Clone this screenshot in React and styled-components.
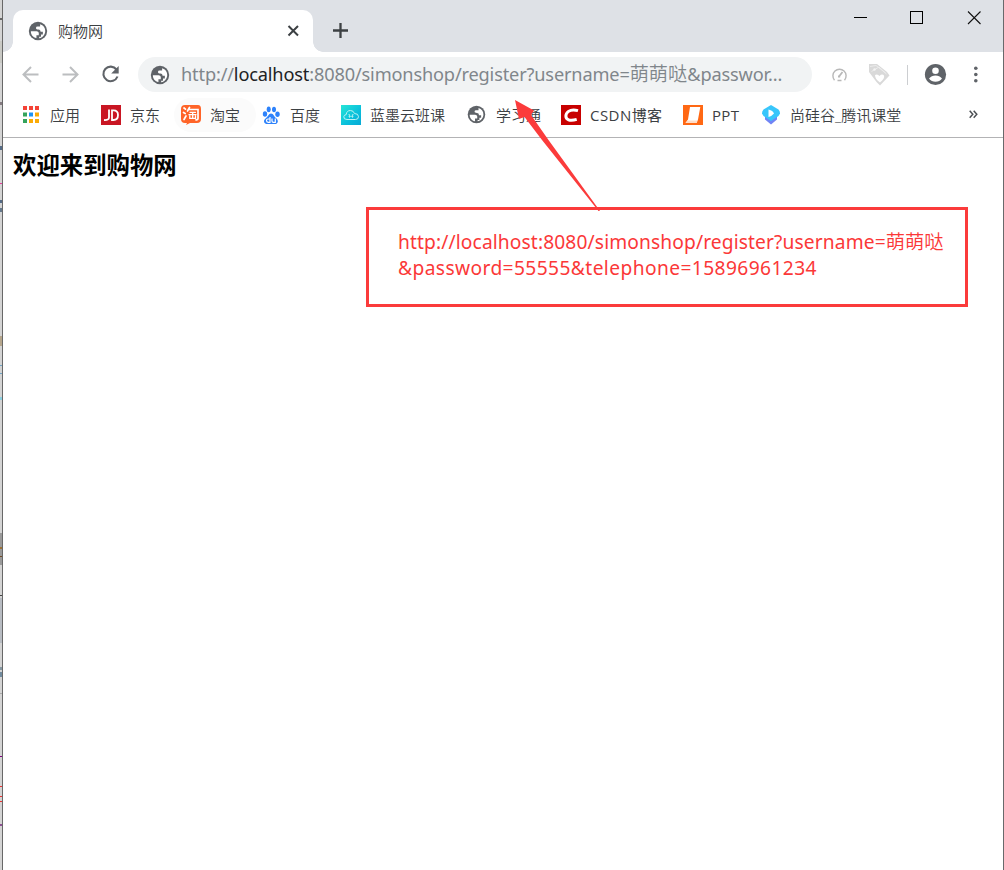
import React from "react";
import styled, { createGlobalStyle } from "styled-components";

const UI = '"Noto Sans", "Noto Sans CJK SC", sans-serif';
const CJK = '"Open Sans", "Noto Sans CJK SC", sans-serif';

const Global = createGlobalStyle`
  html, body { margin: 0; padding: 0; background: #fff; overflow: hidden; }
  * { box-sizing: border-box; }
  svg { display: block; flex: none; }
`;

const Desktop = styled.div`
  position: relative;
  display: flex;
  width: 1004px;
  height: 870px;
  overflow: hidden;
`;

const Behind = styled.svg`
  width: 2px;
  height: 870px;
`;

const Window = styled.div`
  flex: 1;
  display: flex;
  flex-direction: column;
  border-left: 1px solid #686868;
  border-right: 1px solid #68696b;
  background: #fff;
`;

const TabStrip = styled.header`
  display: flex;
  align-items: flex-start;
  height: 52px;
  padding-left: 10px;
  background: #dee1e6;
`;

const Tab = styled.div`
  position: relative;
  display: flex;
  align-items: center;
  width: 300px;
  height: 42px;
  margin-top: 10px;
  padding: 0 13px 0 14px;
  border-radius: 10px 10px 0 0;
  background: #fff;

  &::before, &::after {
    content: "";
    position: absolute;
    bottom: 0;
    width: 10px;
    height: 10px;
  }
  &::before {
    left: -10px;
    background: radial-gradient(circle at 0 0, transparent 9.5px, #fff 10px);
  }
  &::after {
    right: -10px;
    background: radial-gradient(circle at 100% 0, transparent 9.5px, #fff 10px);
  }
`;

const TabTitle = styled.span`
  flex: 1;
  margin: 0 0 1px 9px;
  font: 15px/20px ${CJK};
  font-weight: 350;
  color: #3c4043;
`;

const NewTab = styled.div`
  margin: 23px 0 0 20px;
`;

const Controls = styled.div`
  display: flex;
  gap: 43px;
  margin: 11px 22px 0 auto;
`;

const Toolbar = styled.div`
  display: flex;
  align-items: center;
  height: 45px;
  padding-left: 17px;
`;

const NavButtons = styled.div`
  display: flex;
  gap: 20px;
  width: 118px;
`;

const Omnibox = styled.div`
  display: flex;
  align-items: center;
  width: 674px;
  height: 35px;
  padding-left: 11px;
  border-radius: 18px;
  background: #f1f3f4;
`;

const Url = styled.div`
  margin: 0 0 1px 10px;
  white-space: pre;
  font: 18.2px/26px ${UI};
  letter-spacing: ${(p) => p.$track}px;
  color: #80868b;
`;

const Host = styled.span`
  color: #202124;
`;

const Han = styled.span`
  font-family: "Noto Sans CJK SC", sans-serif;
  font-size: ${(p) => p.$size}px;
  font-weight: 350;
  letter-spacing: 0;
  line-height: 1;
`;

const Actions = styled.div`
  display: flex;
  align-items: center;
  margin-left: 17px;
`;

const TagIcon = styled.svg`
  margin-left: 19px;
`;

const MenuDots = styled.svg`
  margin-left: 26px;
`;

const Divider = styled.div`
  width: 1px;
  height: 20px;
  margin: 0 16px 0 17px;
  background: #ccced1;
`;

const BookmarkBar = styled.nav`
  display: flex;
  align-items: center;
  height: 41px;
  padding: 0 0 5px 11px;
  border-bottom: 1px solid #b3b3b5;
`;

const Bookmark = styled.div`
  display: flex;
  align-items: center;
  gap: 9px;
  height: 34px;
  margin-right: -2px;
  padding: 0 15px 0 7px;
  border-radius: 17px;
  background: ${(p) => (p.$hover ? "#fbfbfb" : "none")};
`;

const Label = styled.span`
  width: ${(p) => p.$w + 1}px;
  white-space: nowrap;
  font: 15px/20px ${CJK};
  font-weight: ${(p) => p.$weight || 350};
  letter-spacing: ${(p) => p.$track || 0}px;
  color: #3c4043;
`;

const More = styled.svg`
  margin-left: 53px;
`;

const Page = styled.main`
  flex: 1;
  padding: 10px 0 0 10px;
`;

const Heading = styled.h1`
  margin: 0;
  font: bold 23.4px/32px "Noto Sans CJK SC", sans-serif;
  color: #000;
`;

const Callout = styled.div`
  position: absolute;
  left: 366px;
  top: 207px;
  width: 602px;
  height: 100px;
  padding: 19px 0 0 29px;
  border: 3px solid #fb3b3b;
  white-space: pre;
  font: 19.2px/26px ${UI};
  color: #fb3838;
`;

const CalloutLine = styled.div`
  height: 26px;
  letter-spacing: ${(p) => p.$track}px;
`;

const Arrow = styled.svg`
  position: absolute;
  left: 500px;
  top: 90px;
`;

const Globe = ({ size = 22 }) => (
  <svg width={size} height={size} viewBox="0 0 24 24">
    <circle cx="12" cy="12" r="10" fill="#5f6368" />
    <path d="M4.200 12.300H9.300C12.800 12.300 13.200 13.600 12.800 16.600H10.300V19.700C6.500 19 4.200 16 4.200 12.300Z" fill="#fff" />
    <path d="M14.300 4.500C18 5.500 19.900 8.500 19.900 12C19.900 16 17 19.400 13.300 19.800V18.300H15.300V15.800H17.300V12.800H14.800C14.600 11.300 14.300 10.600 12.500 10.400C11 10.300 9.800 9.900 9.800 8.700Q9.800 7.200 11.500 7.200H14.300Z" fill="#fff" />
  </svg>
);

const Back = ({ flip }) => (
  <svg width="20" height="20" viewBox="0 0 20 20" fill="none" stroke="#bcbec0" strokeWidth="2">
    <path d={flip ? "M2.500 9.500H17M10 2L17.500 9.500L10 17" : "M18.500 9.500H4M11 2L3.500 9.500L11 17"} />
  </svg>
);

const APP_COLORS = ["#f44336", "#f44336", "#f44336", "#34a35c", "#1e94f4", "#fbab06", "#34a35c", "#fbab06", "#fbab06"];

const AppsIcon = () => (
  <svg width="20" height="20">
    {APP_COLORS.map((c, i) => (
      <rect key={i} x={2 + (i % 3) * 6} y={1 + Math.floor(i / 3) * 6.500} width="4" height="4" fill={c} />
    ))}
  </svg>
);

const JdIcon = () => (
  <svg width="20" height="20">
    <rect width="20" height="20" fill="#c91623" />
    <g fill="none" stroke="#fff" strokeWidth="1.800">
      <path d="M8 4.500V12.500Q8 15.300 3 15" />
      <path d="M11 5.400H12.500Q17 5.400 17 10Q17 15 12.500 15H11Z" />
    </g>
  </svg>
);

const TaobaoIcon = () => (
  <svg width="20" height="20">
    <path d="M4 0H17Q20 0 20 4V14Q20 18 16 18H9L5 20L6 18H4Q0 18 0 14V4Q0 0 4 0Z" fill="#ff6428" />
    <g fill="none" stroke="#fff" strokeWidth="1.700" strokeLinecap="round">
      <path d="M3 3L4.500 4.200M2.500 7.500L4.200 8.500M3 14.500L5 11" />
      <path d="M8.500 2.500L6.500 6M7.500 4.500H17V13.500Q17 15 15 14.800" />
      <path d="M9 7.300H14.500M8 9.700H15M11.700 7.300V13.200M8.800 11V13.400H14.500V11" strokeWidth="1.300" />
    </g>
  </svg>
);

const BaiduIcon = () => (
  <svg width="20" height="20">
    <g fill="#2d82fb">
      <ellipse cx="4" cy="9" rx="2.200" ry="2.800" />
      <ellipse cx="7.700" cy="4.300" rx="2" ry="2.900" />
      <ellipse cx="13" cy="4.500" rx="2" ry="2.800" />
      <ellipse cx="16.500" cy="9.300" rx="2.200" ry="2.700" />
      <path d="M10 8.500C12.500 8.500 13 11.500 15 13C18.500 16 16.500 19.500 13.500 19H7C3.500 19.500 1.500 16 4.500 13.500C7 12 7.500 8.500 10 8.500Z" />
    </g>
    <g fill="none" stroke="#fff" strokeWidth="1.200">
      <path d="M9 12V17.300H7.200Q5.500 17.300 5.500 15.600T7.200 14H9M11 13.500V16Q11 17.300 12.400 17.300H14.300V13.500" />
    </g>
  </svg>
);

const CloudIcon = () => (
  <svg width="20" height="20">
    <defs>
      <linearGradient id="mo" x2="1" y2="1">
        <stop stopColor="#27e5d6" />
        <stop offset=".6" stopColor="#09bfdc" />
        <stop offset="1" stopColor="#08a9d5" />
      </linearGradient>
    </defs>
    <rect width="20" height="20" fill="url(#mo)" />
    <g fill="none" stroke="#b9f3f4" strokeWidth="1">
      <path d="M6 14.500Q2.500 14.500 2.800 11.700Q3 9.800 5.200 9.600Q5.600 5.500 9.500 5.500Q12.500 5.500 13.500 8.500Q17.500 8.500 17.500 11.700Q17.400 14.500 14.500 14.500Z" />
      <path d="M7.500 9.500H8.500V12.800M12.500 9.500H11.500V12.800M7.500 11.300H12.500" strokeWidth=".8" />
    </g>
  </svg>
);

const CsdnIcon = () => (
  <svg width="20" height="20">
    <rect width="20" height="20" fill="#c80000" />
    <path d="M17 5.600C13 4.500 10 4.600 7.500 6.400C4 9 4 13.500 7.500 14.800C9.500 15.500 12.500 15.300 15.700 14.400" fill="none" stroke="#fff" strokeWidth="3" />
  </svg>
);

const PptIcon = () => (
  <svg width="20" height="20">
    <rect width="20" height="20" fill="#ff6814" />
    <path d="M7 2H17.300L15 14.500L13.500 18H2.500L5 14.500Z" fill="#fff" />
    <path d="M2.500 18L4.500 15.500H14.700L13.500 18Z" fill="#ffdcc6" />
  </svg>
);

const SchoolIcon = () => (
  <svg width="20" height="20">
    <path d="M4 11H16V14.500L10 19.500L4 14.500Z" fill="#7184f5" />
    <path d="M10 0L17.500 4.500Q19 6 19 8.500L17.500 11L10 16L2.500 11L1 8.500Q1 6 2.500 4.500Z" fill="#38c6fb" />
    <path d="M7.500 4.500Q12 5.500 13 8.500Q11 11 7.500 12Z" fill="#fff" />
  </svg>
);

const BOOKMARKS = [
  { label: "应用", w: 30, Icon: AppsIcon },
  { label: "京东", w: 30, Icon: JdIcon },
  { label: "淘宝", w: 30, Icon: TaobaoIcon, hover: true },
  { label: "百度", w: 30, Icon: BaiduIcon },
  { label: "蓝墨云班课", w: 75, Icon: CloudIcon },
  { label: "学习通", w: 44, Icon: () => <Globe size={21} /> },
  { label: "CSDN博客", w: 72, Icon: CsdnIcon, weight: 400, track: 0.45 },
  { label: "PPT", w: 28, Icon: PptIcon, weight: 400, track: 0.3 },
  { label: "尚硅谷_腾讯课堂", w: 112, Icon: SchoolIcon },
];

const MARKS = [
  [18, "#666", 2], [41, "#c9c9c4", 22], [102, "#847a80", 3], [146, "#556b86", 4],
  [183, "#e83b99", 1], [200, "#556b86", 3], [208, "#65798c", 4], [336, "#b5a68c", 10],
  [365, "#70a5c4", 1], [373, "#70a5c4", 1], [397, "#8ccfe0", 3],
  [533, "#9a9a9a", 32], [547, "#9c7134", 2], [556, "#714a25", 1], [595, "#444", 1],
  [598, "#b8bcc2", 45], [667, "#8798a2", 3], [672, "#718b9e", 5], [693, "#aaa", 1],
  [756, "#800080", 1], [786, "#e33", 1], [796, "#e33", 1], [801, "#e33", 1], [824, "#8c4f92", 2],
];

export default function App() {
  return (
    <Desktop>
      <Global />
      <Behind>
        <rect width="2" height="870" fill="#d4d4d4" />
        {MARKS.map(([y, c, h]) => (
          <rect key={y} y={y} width="2" height={h} fill={c} />
        ))}
      </Behind>
      <Window>
        <TabStrip>
          <Tab>
            <Globe />
            <TabTitle>购物网</TabTitle>
            <svg width="13" height="13" stroke="#3c4043" strokeWidth="2">
              <path d="M1.500 1L11 10.500M11 1L1.500 10.500" />
            </svg>
          </Tab>
          <NewTab>
            <svg width="15" height="15" stroke="#3c4043" strokeWidth="2.300">
              <path d="M7.500 0V15M0 7.500H15" />
            </svg>
          </NewTab>
          <Controls>
            <svg width="13" height="13"><rect y="6" width="13" height="1" fill="#000" /></svg>
            <svg width="13" height="13"><rect x=".5" y=".5" width="12" height="12" fill="none" stroke="#000" /></svg>
            <svg width="15" height="14" stroke="#111" strokeWidth="1.100"><path d="M2 .5L14.500 13M14.500 .5L2 13" /></svg>
          </Controls>
        </TabStrip>
        <Toolbar>
          <NavButtons>
            <Back />
            <Back flip />
            <svg width="20" height="20" viewBox="0 0 20 20">
              <path d="M16.500 4.500A7.300 7.300 0 1 0 17.500 11.500" fill="none" stroke="#5f6368" strokeWidth="2.100" />
              <path d="M18.700 1V8.500H11.200Z" fill="#5f6368" />
            </svg>
          </NavButtons>
          <Omnibox>
            <Globe size={22} />
            <Url $track={-0.16}>
              http://<Host>localhost</Host>:8080/simonshop/register?username=<Han $size={19.2}>萌萌哒</Han>&amp;passwor...
            </Url>
          </Omnibox>
          <Actions>
            <svg width="20" height="20" viewBox="0 0 20 20" fill="none" stroke="#b8b8b8" strokeWidth="1.400">
              <path d="M5.500 15.200A6.600 6.600 0 1 1 15.500 15.200M8.500 15.500H12.500" />
              <path d="M10 11.500L13.500 7M9 11.500H11.200" strokeWidth="1.800" />
            </svg>
            <TagIcon width="22" height="22" viewBox="0 0 22 22">
              <path d="M1 0H9L19 8L21.500 11.500L12 21.500L8.500 18L1 8Z" fill="#d9d9d9" />
              <path d="M2 2.500L8 1.500L17.500 9M3.500 7.500L11 3L18.500 10" fill="none" stroke="#ececec" />
              <path d="M7 11Q9.500 9.500 11.500 12Q14 9.500 16 11.500Q17 14.500 12 18.500Q7 15 7 11Z" fill="#fff" />
              <circle cx="6.500" cy="5.500" r="1.200" fill="#f4f4f4" />
            </TagIcon>
            <Divider />
            <svg width="24" height="24" viewBox="0 0 24 24">
              <circle cx="11.500" cy="11.500" r="10.600" fill="#5f6368" />
              <circle cx="11.500" cy="7.800" r="3.300" fill="#fff" />
              <path d="M5 15.500Q7.500 12.500 11.500 12.500T18 15.500Q15.500 18.800 11.500 18.800T5 15.500Z" fill="#fff" />
            </svg>
            <MenuDots width="4" height="18" fill="#5f6368">
              <circle cx="1.800" cy="2.200" r="1.800" /><circle cx="1.800" cy="8.500" r="1.800" /><circle cx="1.800" cy="14.800" r="1.800" />
            </MenuDots>
          </Actions>
        </Toolbar>
        <BookmarkBar>
          {BOOKMARKS.map(({ label, w, Icon, hover, weight, track }) => (
            <Bookmark key={label} $hover={hover}>
              <Icon />
              <Label $w={w} $weight={weight} $track={track}>{label}</Label>
            </Bookmark>
          ))}
          <More width="9" height="9" fill="none" stroke="#4c5054" strokeWidth="1.500">
            <path d="M.7 .8L3.800 4.300L.7 7.800M4.700 .8L7.800 4.300L4.700 7.800" />
          </More>
        </BookmarkBar>
        <Page>
          <Heading>欢迎来到购物网</Heading>
        </Page>
      </Window>
      <Callout>
        <CalloutLine $track={0.12}>
          http://localhost:8080/simonshop/register?username=<Han $size={19.3}>萌萌哒</Han>
        </CalloutLine>
        <CalloutLine $track={0.4}>&amp;password=55555&amp;telephone=15896961234</CalloutLine>
      </Callout>
      <Arrow width="110" height="125">
        <path d="M15 10L34 20.500L31 25L48.500 50L100 121L98.500 121L42 50L24.500 27L19 29Z" fill="#fb3b3b" />
      </Arrow>
    </Desktop>
  );
}
